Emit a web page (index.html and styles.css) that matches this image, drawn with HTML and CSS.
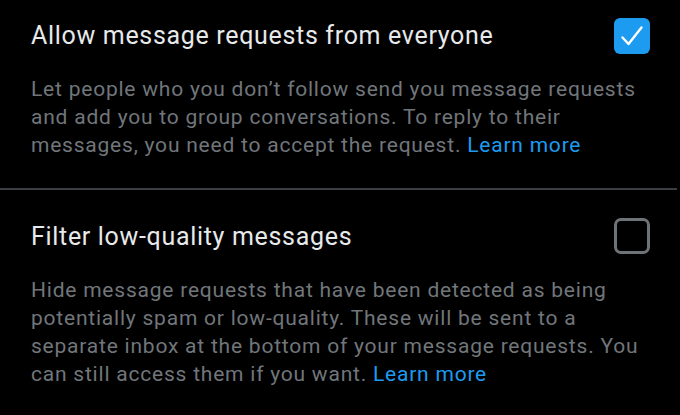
FILE: index.html
```html
<!DOCTYPE html>
<html>
<head>
<meta charset="utf-8">
<link rel="stylesheet" href="styles.css">
</head>
<body>
<div class="page">
  <section class="setting first">
    <div class="head">
      <span class="title">Allow message requests from everyone</span>
      <span class="check on">
        <svg viewBox="0 0 36 36" width="36" height="36"><path d="M8.5 19.5 L14.5 26 L27.5 9.5" fill="none" stroke="#fff" stroke-width="2.4" stroke-linecap="round" stroke-linejoin="round"/></svg>
      </span>
    </div>
    <p class="desc">Let people who you don’t follow send you message requests and add you to group conversations. To reply to their messages, you need to accept the request. <a class="link">Learn more</a></p>
  </section>
  <div class="divider"></div>
  <section class="setting second">
    <div class="head">
      <span class="title">Filter low-quality messages</span>
      <span class="check off"></span>
    </div>
    <p class="desc">Hide message requests that have been detected as being potentially spam or low-quality. These will be sent to a separate inbox at the bottom of your message requests. You can still access them if you want. <a class="link">Learn more</a></p>
  </section>
</div>
</body>
</html>
```
FILE: styles.css
```css
html, body {
  margin: 0;
  padding: 0;
  background: #000;
}
body {
  width: 680px;
  height: 415px;
  overflow: hidden;
  font-family: Roboto, "Noto Sans", sans-serif;
}
.setting {
  padding: 0 30px 0 31px;
}
.setting.first {
  padding-top: 20px;
  padding-bottom: 29px;
}
.setting.second {
  padding-top: 31px;
}
.head {
  display: flex;
  align-items: center;
  justify-content: space-between;
  height: 32px;
}
.title {
  color: #e7e9ea;
  font-size: 25px;
  line-height: 32px;
  letter-spacing: 0.68px;
}
.check {
  width: 36px;
  height: 36px;
  box-sizing: border-box;
  border-radius: 6px;
  display: block;
}
.check svg {
  display: block;
}
.check.on {
  background: #1d9bf0;
}
.check.off {
  border: 3px solid #6e7378;
  border-radius: 7px;
  position: relative;
  top: -1px;
}
.desc {
  margin: 23px 0 0 0;
  max-width: 612px;
  color: #71767b;
  font-size: 21px;
  line-height: 28px;
  letter-spacing: 0.78px;
}
.link {
  color: #1d9bf0;
  text-decoration: none;
}
.divider {
  height: 2px;
  background: #3a3d41;
  margin-right: 3px;
}
```
